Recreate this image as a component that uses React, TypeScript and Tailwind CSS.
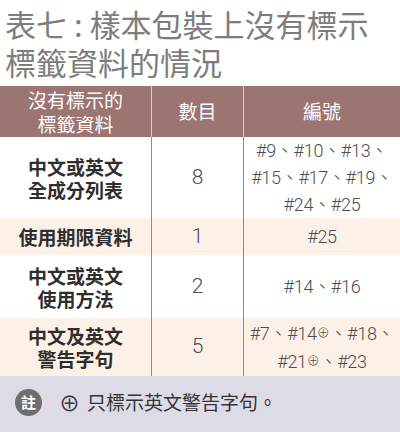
import React from "react";

const font = { fontFamily: '"Noto Sans CJK TC", "Noto Sans", sans-serif' };
const numFont = { fontFamily: 'Roboto, "Noto Sans CJK TC", sans-serif' };

interface Row {
  label: string[];
  count: string;
  ids: React.ReactNode[];
  shaded: boolean;
  h: string;
}

const Plus = () => <span className="text-[13px] align-[3px]">⊕</span>;

const rows: Row[] = [
  {
    label: ["中文或英文", "全成分列表"],
    count: "8",
    ids: ["#9、#10、#13、", "#15、#17、#19、", "#24、#25"],
    shaded: false,
    h: "h-[81px]",
  },
  {
    label: ["使用期限資料"],
    count: "1",
    ids: ["#25"],
    shaded: true,
    h: "h-[37px]",
  },
  {
    label: ["中文或英文", "使用方法"],
    count: "2",
    ids: ["#14、#16"],
    shaded: false,
    h: "h-[63px]",
  },
  {
    label: ["中文及英文", "警告字句"],
    count: "5",
    ids: [
      <>
        #7、#14
        <Plus />
        、#18、
      </>,
      <>
        #21
        <Plus />
        、#23
      </>,
    ],
    shaded: true,
    h: "h-[58px]",
  },
];

export default function App() {
  return (
    <div className="w-[400px] h-[432px] bg-white flex flex-col overflow-hidden" style={font}>
      <div className="h-[86px] pl-[5px] pt-[5px] text-[31px] leading-[38px] text-[#7d7d7d]">
        <div>
          表七<span className="mx-[7px]">:</span>樣本包裝上沒有標示
        </div>
        <div>標籤資料的情況</div>
      </div>

      <div className="grid grid-cols-[151px_92px_1fr] h-[51px] bg-[#9c7572] text-white text-[19px]">
        <div className="flex flex-col items-center justify-center leading-[24px]">
          <span>沒有標示的</span>
          <span>標籤資料</span>
        </div>
        <div className="flex items-center justify-center border-l border-[#d8cdd6]">數目</div>
        <div className="flex items-center justify-center border-l border-[#d8cdd6]">編號</div>
      </div>

      {rows.map((r, i) => (
        <div
          key={i}
          className={`grid grid-cols-[151px_92px_1fr] ${r.h} ${r.shaded ? "bg-[#fdf1e7]" : "bg-white"}`}
        >
          <div className="flex flex-col items-center justify-center text-[19px] leading-[23px] font-bold text-[#2e2e2e]">
            {r.label.map((l) => (
              <span key={l}>{l}</span>
            ))}
          </div>
          <div
            className="flex items-center justify-center border-l border-[#8f85a0] text-[21px] text-[#4d4d4d] font-light"
            style={numFont}
          >
            {r.count}
          </div>
          <div
            className="flex flex-col items-center justify-center border-l border-[#8f85a0] text-[18px] leading-[27px] text-[#4d4d4d] font-light tracking-[-0.3px]"
            style={numFont}
          >
            {r.ids.map((l, j) => (
              <span key={j}>{l}</span>
            ))}
          </div>
        </div>
      ))}

      <div className="flex-1 bg-[#dddbe6] flex items-center pl-[15px] pb-[4px]">
        <div className="w-[27px] h-[27px] rounded-full bg-[#6e6e6e] text-white text-[15px] font-bold flex items-center justify-center">
          註
        </div>
        <span className="ml-[17px] text-[21px] leading-none text-[#333]">⊕</span>
        <span className="ml-[7px] text-[19px] text-[#333]">只標示英文警告字句。</span>
      </div>
    </div>
  );
}
